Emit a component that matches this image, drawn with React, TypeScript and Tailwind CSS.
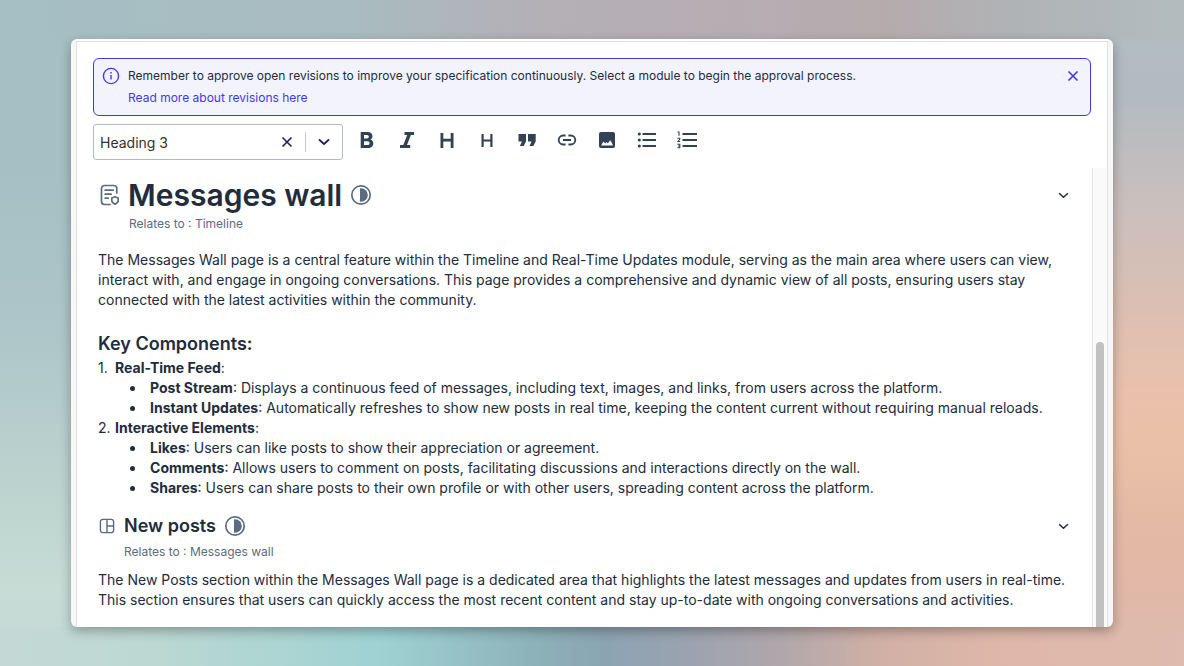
import React from "react";

type IconProps = { className?: string };

const InfoIcon = () => (
  <svg viewBox="0 0 18 18" className="h-[18px] w-[18px] shrink-0" fill="none" stroke="#4338f0" aria-hidden="true">
    <circle cx="9" cy="9" r="7.6" strokeWidth="1.4" />
    <path d="M9 8v4.6" strokeWidth="1.4" />
    <path d="M9 5v1.5" strokeWidth="1.5" />
  </svg>
);

const CrossIcon = ({ className }: IconProps) => (
  <svg viewBox="0 0 12 12" className={className} fill="none" stroke="currentColor" strokeWidth="1.6" aria-hidden="true">
    <path d="M1.5 1.5l9 9M10.5 1.5l-9 9" />
  </svg>
);

const ChevronIcon = ({ className }: IconProps) => (
  <svg viewBox="0 0 12 8" className={className} fill="none" stroke="currentColor" strokeWidth="1.7" aria-hidden="true">
    <path d="M1 1.5l5 4.5 5-4.5" />
  </svg>
);

const HalfIcon = () => (
  <svg viewBox="0 0 22 22" className="h-[22px] w-[22px] shrink-0" aria-hidden="true">
    <circle cx="11" cy="11" r="9.2" fill="none" stroke="#5b6b82" strokeWidth="1.7" />
    <path d="M10 4.2h1a6.8 6.8 0 0 1 0 13.6h-1z" fill="#5b6b82" />
  </svg>
);

const PageIcon = () => (
  <svg viewBox="0 0 20 22" className="h-[22px] w-5 shrink-0" fill="none" stroke="#5b6b82" strokeWidth="1.7" strokeLinecap="round" aria-hidden="true">
    <path d="M16.8 9V4.500a3 3 0 0 0-3-3H4.500a3 3 0 0 0-3 3v13a3 3 0 0 0 3 3H10" />
    <path d="M5.200 6.200h8M5.200 10.200h6M5.200 14.200h3" />
    <path d="M15 12.800l3.200 1.200v2.600c0 1.800-1.300 2.900-3.200 3.700-1.900-.8-3.200-1.900-3.200-3.700V14z" strokeLinejoin="round" />
  </svg>
);

const PanelIcon = () => (
  <svg viewBox="0 0 16 16" className="h-4 w-4 shrink-0" fill="none" stroke="#5b6b82" strokeWidth="1.4" aria-hidden="true">
    <rect x="1.400" y="1.400" width="13.200" height="13.200" rx="2.400" />
    <path d="M8 1.400v13.200M8 8h6.600" />
  </svg>
);

const tools: { label: string; icon: React.ReactNode }[] = [
  {
    label: "Bold",
    icon: (
      <path
        fillRule="evenodd"
        d="M3.700 2h7c2.900 0 4.800 1.700 4.800 4.200 0 1.500-.8 2.700-2 3.400 1.700.6 2.800 2 2.800 3.900 0 2.700-2.100 4.500-5.200 4.500H3.700zM7 5v3.500h2.900c1.200 0 1.900-.7 1.900-1.750S11.100 5 9.900 5zM7 11.300V15h3.500c1.300 0 2.100-.7 2.100-1.850s-.8-1.850-2.100-1.850z"
      />
    ),
  },
  { label: "Italic", icon: <path d="M7.500 2H17v3h-3.100L10 15h3.200v3H3v-3h3.300l3.900-10H7.500z" /> },
  { label: "Heading 1", icon: <path d="M3.500 3h2.800v5.800h7.400V3h2.800v15h-2.800v-6.500H6.300V18H3.500z" /> },
  { label: "Heading 2", icon: <path d="M4.500 4h2.200v5.400h6.600V4h2.200v13h-2.200v-5.400H6.700V17H4.500z" /> },
  {
    label: "Quote",
    icon: <path d="M1.500 4h7.500v7.500L6.700 16H2.900l2-4.500H1.500zM11 4h7.700v7.500L16.300 16h-3.800l2-4.500H11z" />,
  },
  {
    label: "Link",
    icon: (
      <path
        fill="none"
        stroke="#334155"
        strokeWidth="1.8"
        d="M8.600 5.500H6.200a4.500 4.500 0 0 0 0 9h2.400M11.400 5.500h2.400a4.500 4.500 0 0 1 0 9h-2.400M6 10h8"
      />
    ),
  },
  {
    label: "Image",
    icon: (
      <path
        fillRule="evenodd"
        d="M4 2h12a2 2 0 0 1 2 2v12a2 2 0 0 1-2 2H4a2 2 0 0 1-2-2V4a2 2 0 0 1 2-2zM4.200 15.500h11.800l-1.400-3.200-1.500-2-2.300 3.200-1.300-1.500-1.300 1.500-1.600-2-1.400 2z"
      />
    ),
  },
  {
    label: "Bulleted list",
    icon: (
      <>
        <path d="M5.500 3h13.500v2H5.500zM5.500 9h13.500v2H5.500zM5.500 15h13.500v2H5.500z" />
        <circle cx="2.300" cy="4" r="1.600" />
        <circle cx="2.300" cy="10" r="1.600" />
        <circle cx="2.300" cy="16" r="1.600" />
      </>
    ),
  },
  {
    label: "Numbered list",
    icon: (
      <>
        <path d="M5.500 3H20v2H5.500zM5.500 9H20v2H5.500zM5.500 15H20v2H5.500z" />
        <path
          fill="none"
          stroke="#334155"
          strokeWidth="1.1"
          d="M.5 2H2v3.800M.3 8.300h2.500v1L.9 11.500h2.300M.3 14.300h2.500v3.400H.3M1 16h1.800"
        />
      </>
    ),
  },
];

type Item = { term: string; text: string };

const groups: { title: string; items: Item[] }[] = [
  {
    title: "Real-Time Feed",
    items: [
      {
        term: "Post Stream",
        text: "Displays a continuous feed of messages, including text, images, and links, from users across the platform.",
      },
      {
        term: "Instant Updates",
        text: "Automatically refreshes to show new posts in real time, keeping the content current without requiring manual reloads.",
      },
    ],
  },
  {
    title: "Interactive Elements",
    items: [
      { term: "Likes", text: "Users can like posts to show their appreciation or agreement." },
      {
        term: "Comments",
        text: "Allows users to comment on posts, facilitating discussions and interactions directly on the wall.",
      },
      {
        term: "Shares",
        text: "Users can share posts to their own profile or with other users, spreading content across the platform.",
      },
    ],
  },
];

const backdrop =
  "bg-[linear-gradient(to_right,#c4d9d6,#bcd8d2_13%,#9fd2d3_32%,#8cb0b8_46%,#8ba4b2_51%,#9ba3b0_58%,#b0a7ab_66%,#d0b0a5_74%,#dfb7a9_84%,#debbae),linear-gradient(to_right,#a5bfc4,#a9bcc1_30%,#b3b0b6_45%,#b7adb2_65%,#b6abad_74%,#b0b3b6_86%,#b2bcbe),linear-gradient(to_bottom,#a5bfc4,#a5bfc4_25%,#aec6c9_50%,#bdd4cf_75%,#c6dcd5_88%,#c4d9d6),linear-gradient(to_bottom,#b2bcbe,#b3bbc0_15%,#cabfbd_31%,#dcbfb2_46%,#ebc1ab_61%,#e9bfa7_69%,#e4b9a5_80%,#e0b8a8_90%,#debbae)] bg-no-repeat [background-size:100%_39px,100%_39px,50%_100%,50%_100%] [background-position:bottom,top,left,right]";

export default function App() {
  return (
    <div className={`flex h-screen flex-col overflow-hidden px-[6%] py-[39px] font-['Inter','Liberation_Sans',sans-serif] text-[#212c3d] ${backdrop}`}>
      <main className="flex min-h-0 flex-1 flex-col overflow-hidden rounded-md bg-[#f7f7f7] px-[5px] shadow-[0_4px_12px_rgba(0,0,0,0.3)]">
        <div className="h-[2px] shrink-0 bg-white" />
        <div className="flex min-h-0 flex-1 flex-col border border-b-0 border-[#dfe1e4] bg-white">
          <div className="px-4 pt-4">
            <section className="flex items-start gap-2 rounded-md border border-[#4338f0] bg-[#f3f3fe] py-[6px] pr-[7px] pl-2 text-xs leading-[22px]">
              <div className="pt-[2px]">
                <InfoIcon />
              </div>
              <div className="flex-1">
                <p>
                  Remember to approve open revisions to improve your specification continuously. Select a module to begin
                  the approval process.
                </p>
                <a href="#revisions" className="text-[#4338f0]">
                  Read more about revisions here
                </a>
              </div>
              <button type="button" aria-label="Dismiss" className="flex h-[22px] w-5 items-center justify-center text-[#4338f0]">
                <CrossIcon className="h-3 w-3" />
              </button>
            </section>
            <div className="flex items-center gap-[14px] pt-2">
              <div className="flex h-9 w-[250px] items-center rounded-[3px] border border-[#b4bac6] text-[#1e1b5e]">
                <select aria-label="Text style" className="h-full min-w-0 flex-1 appearance-none pt-[2px] pl-[6px] text-sm text-[#303030] outline-none">
                  <option>Heading 3</option>
                </select>
                <button type="button" aria-label="Clear" className="flex w-9 justify-center">
                  <CrossIcon className="h-3 w-3" />
                </button>
                <span className="h-5 w-px bg-[#c8ccd2]" />
                <button type="button" aria-label="Open styles" className="flex w-9 justify-center">
                  <ChevronIcon className="h-2 w-3" />
                </button>
              </div>
              <div className="flex gap-5 pb-1">
                {tools.map((tool) => (
                  <button key={tool.label} type="button" aria-label={tool.label}>
                    <svg viewBox="0 0 20 20" className="h-5 w-5" fill="#334155" aria-hidden="true">
                      {tool.icon}
                    </svg>
                  </button>
                ))}
              </div>
            </div>
          </div>

          <div className="mt-2 flex min-h-0 flex-1">
            <article className="min-w-0 flex-1 overflow-hidden pr-5 pl-[21px] text-sm leading-5">
              <header className="flex items-center pt-[7px]">
                <span className="pl-[2px]">
                  <PageIcon />
                </span>
                <h1 className="ml-2 text-3xl leading-10 font-semibold">Messages wall</h1>
                <span className="ml-2">
                  <HalfIcon />
                </span>
                <button type="button" aria-label="Collapse Messages wall" className="ml-auto flex w-4 justify-center">
                  <ChevronIcon className="h-[7px] w-[11px]" />
                </button>
              </header>
              <p className="pl-[31px] text-xs leading-[18px] text-[#5b6b82]">Relates to : Timeline</p>
              <p className="mt-[17px]">
                The Messages Wall page is a central feature within the Timeline and Real-Time Updates module, serving as
                the main area where users can view, interact with, and engage in ongoing conversations. This page
                provides a comprehensive and dynamic view of all posts, ensuring users stay connected with the latest
                activities within the community.
              </p>
              <h3 className="mt-5 text-lg leading-7 font-semibold">Key Components:</h3>
              <ol>
                {groups.map((group, i) => (
                  <li key={group.title}>
                    <span className="inline-block w-[17px]">{i + 1}.</span>
                    <strong className="font-bold">{group.title}</strong>:
                    <ul className="pl-8">
                      {group.items.map((item) => (
                        <li
                          key={item.term}
                          className="flex gap-[15px] before:mt-2 before:h-[5px] before:w-[5px] before:shrink-0 before:rounded-full before:bg-[#212c3d]"
                        >
                          <p>
                            <strong className="font-bold">{item.term}</strong>: {item.text}
                          </p>
                        </li>
                      ))}
                    </ul>
                  </li>
                ))}
              </ol>
              <header className="flex items-center pt-[14px]">
                <span className="pl-px">
                  <PanelIcon />
                </span>
                <h2 className="ml-[9px] text-lg leading-7 font-semibold">New posts</h2>
                <span className="ml-2">
                  <HalfIcon />
                </span>
                <button type="button" aria-label="Collapse New posts" className="ml-auto flex w-4 justify-center">
                  <ChevronIcon className="h-[7px] w-[11px]" />
                </button>
              </header>
              <p className="pt-[3px] pl-[26px] text-xs leading-[18px] text-[#5b6b82]">Relates to : Messages wall</p>
              <p className="mt-[9px]">
                The New Posts section within the Messages Wall page is a dedicated area that highlights the latest
                messages and updates from users in real-time. This section ensures that users can quickly access the
                most recent content and stay up-to-date with ongoing conversations and activities.
              </p>
            </article>
            <div className="flex w-[15px] flex-col border-l border-[#e4e4e4] bg-[#fafafa] px-[3px]">
              <div className="grow-[38]" />
              <div className="grow-[62] rounded-t-full bg-[#c1c1c1]" />
            </div>
          </div>
        </div>
      </main>
    </div>
  );
}
